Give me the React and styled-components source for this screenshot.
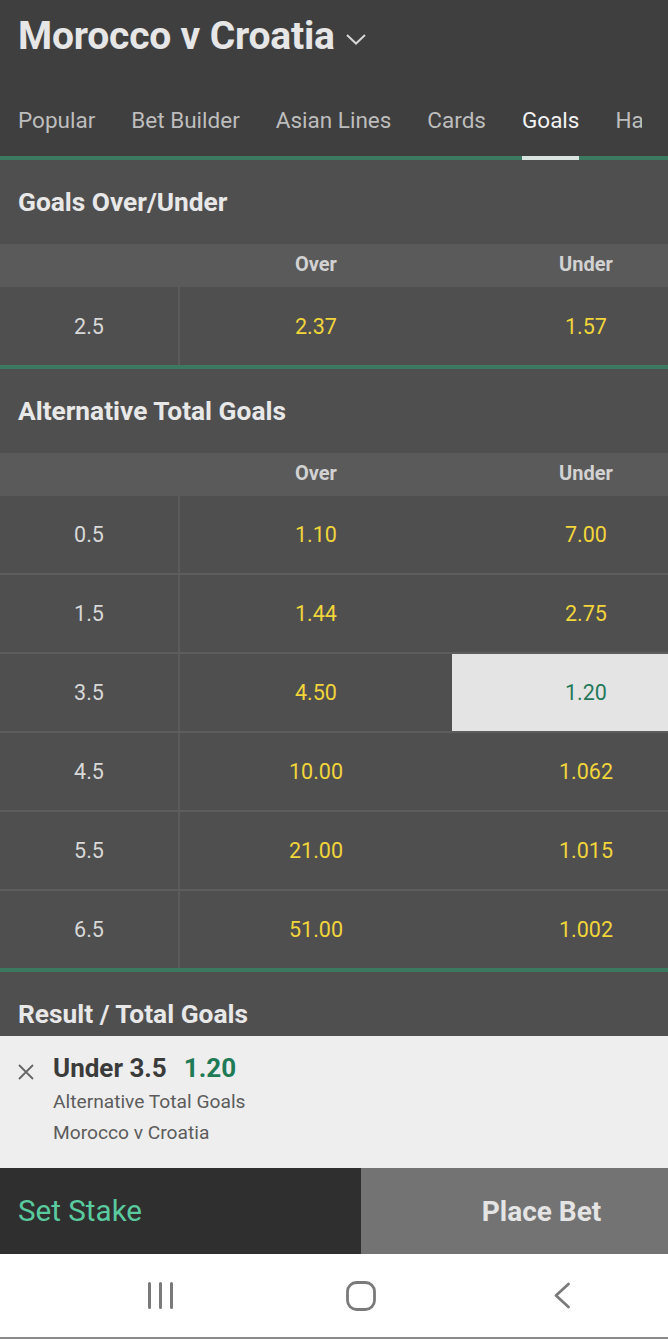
import React from 'react'
import styled, { createGlobalStyle } from 'styled-components'

const GlobalStyle = createGlobalStyle`
  html, body {
    margin: 0;
    padding: 0;
    background: #ffffff;
  }
  * {
    box-sizing: border-box;
  }
`

const Page = styled.div`
  display: flex;
  flex-direction: column;
  width: 668px;
  height: 1339px;
  overflow: hidden;
  background-color: #4f4f4f;
  font-family: Roboto, 'Liberation Sans', sans-serif;
`

const Content = styled.div`
  flex: 1;
  overflow: hidden;
`

const Header = styled.header`
  background-color: #3f3f3f;
`

const TitleRow = styled.div`
  display: flex;
  align-items: center;
  height: 72px;
  padding: 0 18px;
  gap: 10px;
`

const Title = styled.h1`
  margin: 0;
  font-size: 39px;
  font-weight: 700;
  color: #e6e6e6;
  letter-spacing: -0.2px;
`

const Chevron = styled.svg`
  margin-top: 6px;
`

const TabStrip = styled.div`
  border-bottom: 4px solid #3b7a60;
`

const TabBar = styled.nav`
  display: flex;
  gap: 36px;
  margin: 0 26px -4px 0;
  padding-left: 18px;
  white-space: nowrap;
  overflow: hidden;
`

const Tab = styled.div`
  flex-shrink: 0;
  display: flex;
  align-items: center;
  height: 72px;
  padding-top: 12px;
  box-sizing: content-box;
  border-bottom: 4px solid ${(p) => (p.$active ? '#d9e3df' : 'transparent')};
  font-size: 22.5px;
  color: ${(p) => (p.$active ? '#f2f2f2' : '#bdbdbd')};
`

const Market = styled.section`
  border-bottom: 4px solid #3b7a60;
`

const MarketTitle = styled.h2`
  display: flex;
  align-items: center;
  height: 84px;
  margin: 0;
  padding: 0 18px;
  font-size: 26.3px;
  font-weight: 700;
  color: #e8e8e8;
`

const Grid = styled.div`
  display: grid;
  grid-template-columns: 180px 272px 1fr;
`

const ColumnHeader = styled(Grid)`
  height: 43px;
  background-color: #5a5a5a;
`

const HeadCell = styled.div`
  display: flex;
  align-items: center;
  justify-content: center;
  padding-left: ${(p) => (p.$last ? '52px' : '0')};
  padding-bottom: 3px;
  font-size: 20px;
  font-weight: 700;
  color: #d2d2d2;
`

const Row = styled(Grid)`
  height: ${(p) => p.$height}px;
  border-top: ${(p) => (p.$first ? 'none' : '2px solid #5d5d5d')};
`

const Cell = styled.div`
  display: flex;
  align-items: center;
  justify-content: center;
  padding-left: ${(p) => (p.$last ? '52px' : '0')};
  font-size: 21.5px;
  color: #d8d8d8;
`

const LineCell = styled(Cell)`
  border-right: 2px solid #5b5b5b;
`

const PriceCell = styled(Cell)`
  background-color: ${(p) => (p.$selected ? '#e4e4e4' : 'transparent')};
  color: ${(p) => (p.$selected ? '#24795a' : '#f1d53a')};
`

const BetSlip = styled.div`
  display: flex;
  height: 132px;
  padding: 14px 0 0 18px;
  background-color: #eeeeee;
`

const CloseIcon = styled.svg`
  flex-shrink: 0;
  margin: 14px 19px 0 0;
`

const SlipBody = styled.div`
  display: flex;
  flex-direction: column;
`

const Selection = styled.div`
  display: flex;
  align-items: center;
  gap: 17px;
  height: 36px;
  font-size: 26px;
  font-weight: 700;
  color: #3b3b3b;
`

const SlipOdds = styled.span`
  color: #1f7a56;
`

const SlipMeta = styled.div`
  height: 31px;
  line-height: 31px;
  font-size: 19.2px;
  color: #5c5c5c;
`

const ActionBar = styled.div`
  display: grid;
  grid-template-columns: 361px 1fr;
  height: 86px;
`

const StakeButton = styled.div`
  display: flex;
  align-items: center;
  padding-left: 18px;
  background-color: #2f2f2f;
  font-size: 29.6px;
  color: #5acb9f;
`

const PlaceButton = styled.div`
  display: flex;
  align-items: center;
  justify-content: center;
  padding-left: 54px;
  background-color: #737373;
  font-size: 28px;
  font-weight: 700;
  color: #e4e4e4;
`

const NavBar = styled.div`
  display: grid;
  grid-template-columns: repeat(3, 201px);
  justify-content: center;
  align-items: center;
  height: 85px;
  padding-left: 54px;
  background-color: #ffffff;
  border-bottom: 2px solid #8a8a8a;
`

const NavIcon = styled.svg`
  justify-self: center;
`

const tabs = ['Popular', 'Bet Builder', 'Asian Lines', 'Cards', 'Goals', 'Handicaps']

const markets = [
  {
    title: 'Goals Over/Under',
    rows: [{ line: '2.5', over: '2.37', under: '1.57' }],
  },
  {
    title: 'Alternative Total Goals',
    rows: [
      { line: '0.5', over: '1.10', under: '7.00' },
      { line: '1.5', over: '1.44', under: '2.75' },
      { line: '3.5', over: '4.50', under: '1.20', selected: true },
      { line: '4.5', over: '10.00', under: '1.062' },
      { line: '5.5', over: '21.00', under: '1.015' },
      { line: '6.5', over: '51.00', under: '1.002' },
    ],
  },
]

const MarketTable = ({ title, rows }) => {
  return (
    <Market>
      <MarketTitle>{title}</MarketTitle>
      <ColumnHeader>
        <HeadCell />
        <HeadCell>Over</HeadCell>
        <HeadCell $last>Under</HeadCell>
      </ColumnHeader>
      {rows.map((row, index) => (
        <Row key={row.line} $first={index === 0} $height={rows.length === 1 ? 78 : index === 0 ? 77 : 79}>
          <LineCell>{row.line}</LineCell>
          <PriceCell>{row.over}</PriceCell>
          <PriceCell $last $selected={row.selected}>
            {row.under}
          </PriceCell>
        </Row>
      ))}
    </Market>
  )
}

const App = () => {
  return (
    <>
      <GlobalStyle />
      <Page>
        <Content>
          <Header>
            <TitleRow>
              <Title>Morocco v Croatia</Title>
              <Chevron width="22" height="14" viewBox="0 0 22 14">
                <path d="M2 3 L11 11.5 L20 3" fill="none" stroke="#d6d6d6" strokeWidth="2" />
              </Chevron>
            </TitleRow>
            <TabStrip>
              <TabBar>
                {tabs.map((tab) => (
                  <Tab key={tab} $active={tab === 'Goals'}>
                    {tab}
                  </Tab>
                ))}
              </TabBar>
            </TabStrip>
          </Header>
          {markets.map((market) => (
            <MarketTable key={market.title} title={market.title} rows={market.rows} />
          ))}
          <MarketTitle>Result / Total Goals</MarketTitle>
        </Content>

        <BetSlip>
          <CloseIcon width="16" height="16" viewBox="0 0 16 16">
            <path d="M1 1 L15 15 M15 1 L1 15" stroke="#666666" strokeWidth="1.8" />
          </CloseIcon>
          <SlipBody>
            <Selection>
              <span>Under 3.5</span>
              <SlipOdds>1.20</SlipOdds>
            </Selection>
            <SlipMeta>Alternative Total Goals</SlipMeta>
            <SlipMeta>Morocco v Croatia</SlipMeta>
          </SlipBody>
        </BetSlip>

        <ActionBar>
          <StakeButton>Set Stake</StakeButton>
          <PlaceButton>Place Bet</PlaceButton>
        </ActionBar>

        <NavBar>
          <NavIcon width="27" height="27" viewBox="0 0 27 27">
            <path d="M2.5 1.5 V25.5 M13.5 1.5 V25.5 M24.5 1.5 V25.5" stroke="#7a7a7a" strokeWidth="3" strokeLinecap="round" />
          </NavIcon>
          <NavIcon width="30" height="30" viewBox="0 0 30 30">
            <rect x="1.5" y="1.5" width="27" height="27" rx="9" fill="none" stroke="#7a7a7a" strokeWidth="2.8" />
          </NavIcon>
          <NavIcon width="18" height="27" viewBox="0 0 18 27">
            <path d="M15.5 2 L3 13.5 L15.5 25" fill="none" stroke="#7a7a7a" strokeWidth="2.8" strokeLinecap="round" strokeLinejoin="round" />
          </NavIcon>
        </NavBar>
      </Page>
    </>
  )
}

export default App
